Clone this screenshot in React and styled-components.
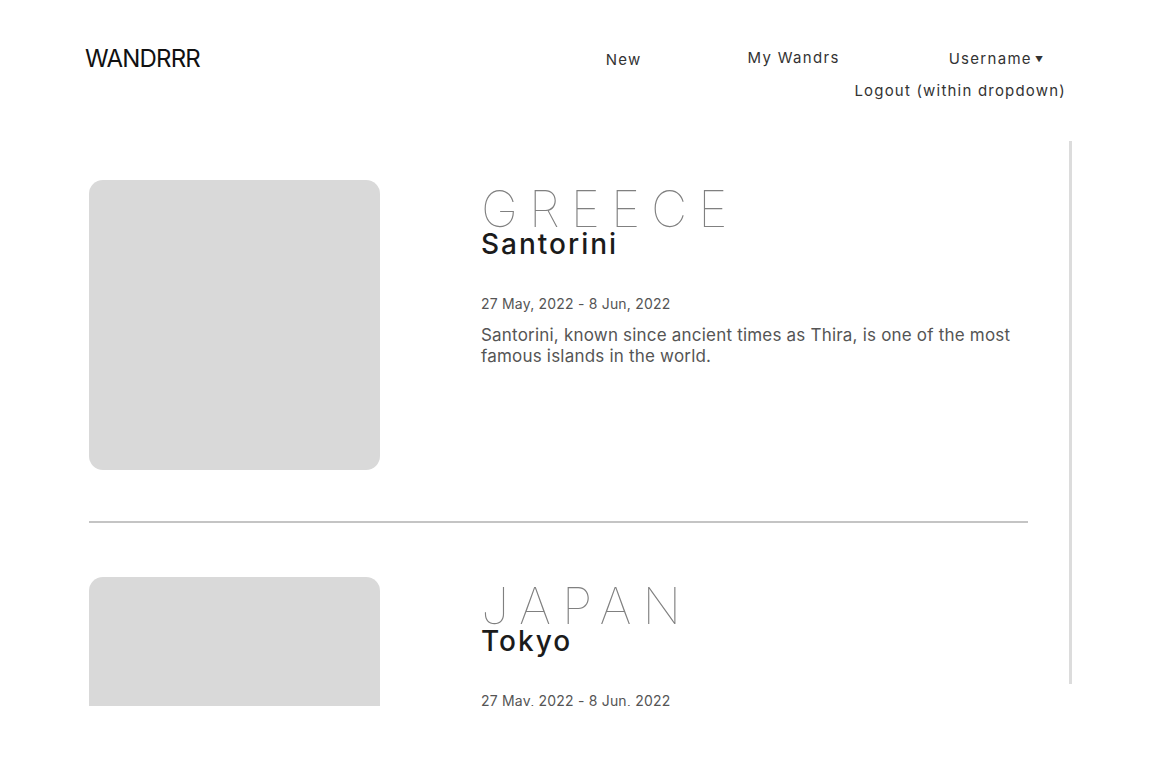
import React from 'react';
import styled, { createGlobalStyle } from 'styled-components';

const GlobalStyle = createGlobalStyle`
	html, body {
		margin: 0;
		padding: 0;
		background: #ffffff;
		font-family: 'Inter', 'Noto Sans', sans-serif;
	}
`;

const Page = styled.div`
	width: 1166px;
	height: 776px;
	overflow: hidden;
`;

const Header = styled.header`
	display: flex;
	justify-content: space-between;
	align-items: flex-start;
	padding: 44px 123px 0 85px;
	height: 97px;
	box-sizing: border-box;
`;

const Logo = styled.h1`
	margin: 0;
	font-size: 24px;
	font-weight: 400;
	color: #111;
	letter-spacing: -0.8px;
`;

const Nav = styled.nav`
	display: flex;
	align-items: flex-start;
	margin-top: 6px;
`;

const NavLink = styled.a`
	font-size: 15px;
	color: #333;
	letter-spacing: 1.3px;
	text-decoration: none;
	margin-left: ${({ gap }) => gap}px;
	margin-top: ${({ lift }) => (lift ? -lift : 0)}px;
`;

const Dropdown = styled.div`
	position: relative;
	margin-left: 109px;
	margin-top: -2px;
`;

const Menu = styled.div`
	position: absolute;
	top: 33px;
	right: -23px;
	white-space: nowrap;
	font-size: 15px;
	color: #333;
	letter-spacing: 1.2px;
`;

const Caret = styled.span`
	font-size: 8px;
	margin-left: 3px;
	vertical-align: 2px;
	letter-spacing: 0;
`;

const Scroller = styled.main`
	position: relative;
	height: 565px;
	margin: 44px 0 0 89px;
	width: 985px;
	overflow: hidden;
`;

const Thumb = styled.div`
	position: absolute;
	top: 0;
	right: 2px;
	width: 3px;
	height: 543px;
	background: #dcdcdc;
`;

const List = styled.div`
	width: 939px;
	padding-top: 39px;
`;

const Card = styled.article`
	display: flex;
	gap: 101px;
`;

const Photo = styled.div`
	width: 291px;
	height: 290px;
	flex-shrink: 0;
	border-radius: 14px;
	background: #d9d9d9;
`;

const Info = styled.div`
	display: flex;
	flex-direction: column;
	padding-top: 4px;
`;

const Country = styled.div`
	font-size: 50px;
	font-weight: 100;
	line-height: 50px;
	letter-spacing: 11px;
	color: #808080;
`;

const City = styled.div`
	font-size: 28px;
	font-weight: 500;
	line-height: 32px;
	letter-spacing: 2px;
	color: #1b1b1b;
	margin-top: -6px;
`;

const Dates = styled.div`
	font-size: 14px;
	color: #555;
	margin-top: 35px;
	line-height: 18px;
	letter-spacing: 0.2px;
`;

const Description = styled.p`
	font-size: 17px;
	line-height: 21px;
	letter-spacing: 0.2px;
	color: #555;
	margin: 12px 0 0;
	max-width: 545px;
`;

const Divider = styled.hr`
	border: 0;
	height: 2px;
	background: #c4c4c4;
	margin: 51px 0 54px;
`;

const trips = [
	{
		country: 'GREECE',
		city: 'Santorini',
		dates: '27 May, 2022 - 8 Jun, 2022',
		text: 'Santorini, known since ancient times as Thira, is one of the most famous islands in the world.',
	},
	{
		country: 'JAPAN',
		city: 'Tokyo',
		dates: '27 May, 2022 - 8 Jun, 2022',
		text: 'Tokyo, Japan’s busy capital, mixes the ultramodern and the traditional.',
	},
];

const App = () => {
	return (
		<Page>
			<GlobalStyle />
			<Header>
				<Logo>WANDRRR</Logo>
				<Nav>
					<NavLink href="#" gap={0}>New</NavLink>
					<NavLink href="#" gap={106} lift={2}>My Wandrs</NavLink>
					<Dropdown>
						<NavLink href="#" gap={0}>
							Username<Caret>▼</Caret>
						</NavLink>
						<Menu>Logout (within dropdown)</Menu>
					</Dropdown>
				</Nav>
			</Header>
			<Scroller>
				<Thumb />
				<List>
					{trips.map((trip, i) => (
						<React.Fragment key={trip.city}>
							{i > 0 && <Divider />}
							<Card>
								<Photo />
								<Info>
									<Country>{trip.country}</Country>
									<City>{trip.city}</City>
									<Dates>{trip.dates}</Dates>
									<Description>{trip.text}</Description>
								</Info>
							</Card>
						</React.Fragment>
					))}
				</List>
			</Scroller>
		</Page>
	);
};

export default App;
